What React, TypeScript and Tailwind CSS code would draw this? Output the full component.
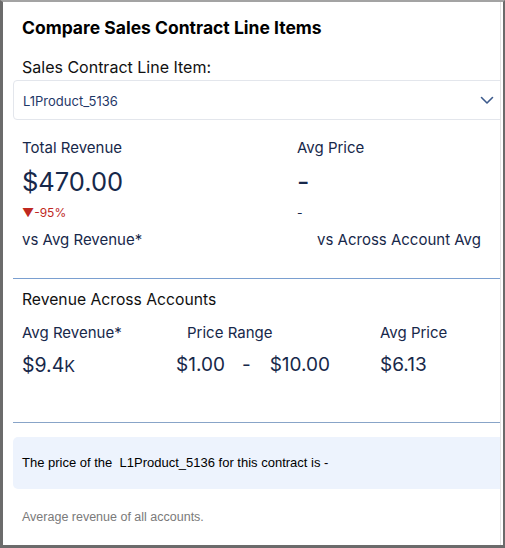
import React from 'react';

const navy = 'text-[#17284a]';

export default function App() {
  return (
    <div className="w-[505px] h-[548px] bg-white border-l-[3px] border-l-[#6b6b6b] border-t-2 border-t-[#a3a3a3] border-r-2 border-r-[#6b6b6b] border-b-[3px] border-b-[#6b6b6b] overflow-hidden font-['Inter',sans-serif]">
      <div className="h-full w-[498px] border-r border-r-[#e3e3e3] overflow-hidden">
        <div className="w-[520px] pl-[10px]">
          <h1 className="pl-[9px] pt-[14px] text-[17.5px] leading-[24px] font-bold text-black">
            Compare Sales Contract Line Items
          </h1>
          <div className="pl-[9px] mt-[16px] text-[16px] leading-[22px] text-[#111]">Sales Contract Line Item:</div>
          <div className="mt-[2px] h-[40px] w-[504px] border border-[#e3e6ec] rounded-[4px] flex items-center pl-[9px] pr-[22px] justify-between">
            <span className="pt-[4px] text-[13px] text-[#1f3868]">L1Product_5136</span>
            <svg width="14" height="9" viewBox="0 0 14 9">
              <path d="M1.5 1.5 L7 7 L12.5 1.5" fill="none" stroke="#3c5a8c" strokeWidth="1.6" strokeLinecap="round" strokeLinejoin="round" />
            </svg>
          </div>

          <div className={`pl-[9px] pt-[18px] flex ${navy}`}>
            <div className="w-[275px]">
              <div className="text-[15px] leading-[20px]">Total Revenue</div>
              <div className="mt-[7px] text-[25.5px] leading-[34px]">$470.00</div>
              <div className="mt-[7px] text-[12px] leading-[14px] text-[#c0281f]">▼-95%</div>
              <div className="mt-[10px] text-[15px] leading-[20px]">vs Avg Revenue*</div>
            </div>
            <div>
              <div className="text-[15px] leading-[20px]">Avg Price</div>
              <div className="mt-[7px] text-[27px] leading-[34px]">-</div>
              <div className="mt-[7px] text-[12px] leading-[14px]">-</div>
              <div className="mt-[10px] pl-[20px] text-[15px] leading-[20px]">vs Across Account Avg</div>
            </div>
          </div>

          <div className="mt-[28px] border-t border-t-[#7a9fd0]" />

          <div className="pl-[9px] pt-[11px] text-[15.7px] leading-[20px] text-[#111]">Revenue Across Accounts</div>
          <div className={`pl-[9px] mt-[13px] flex ${navy}`}>
            <div className="w-[154px]">
              <div className="text-[15px] leading-[20px]">Avg Revenue*</div>
              <div className="mt-[10px] text-[19.5px] leading-[24px]">$9.4<span className="text-[16px]">K</span></div>
            </div>
            <div className="w-[204px]">
              <div className="pl-[11px] text-[15px] leading-[20px]">Price Range</div>
              <div className="mt-[10px] text-[19px] leading-[24px] flex">
                <span>$1.00</span>
                <span className="ml-[17px]">-</span>
                <span className="ml-[19px]">$10.00</span>
              </div>
            </div>
            <div>
              <div className="text-[15px] leading-[20px]">Avg Price</div>
              <div className="mt-[10px] text-[19px] leading-[24px]">$6.13</div>
            </div>
          </div>

          <div className="mt-[44px] border-t border-t-[#88a4c8]" />

          <div className="mt-[14px] h-[52px] w-[504px] bg-[#edf3fd] rounded-[5px] flex items-center pl-[9px] font-['Liberation_Sans',sans-serif] text-[13px] text-black">
            The price of the&nbsp; L1Product_5136 for this contract is -
          </div>

          <div className="pl-[9px] mt-[20px] text-[12.5px] leading-[16px] text-[#7a7a7a] font-['Liberation_Sans',sans-serif]">
            Average revenue of all accounts.
          </div>
        </div>
      </div>
    </div>
  );
}
